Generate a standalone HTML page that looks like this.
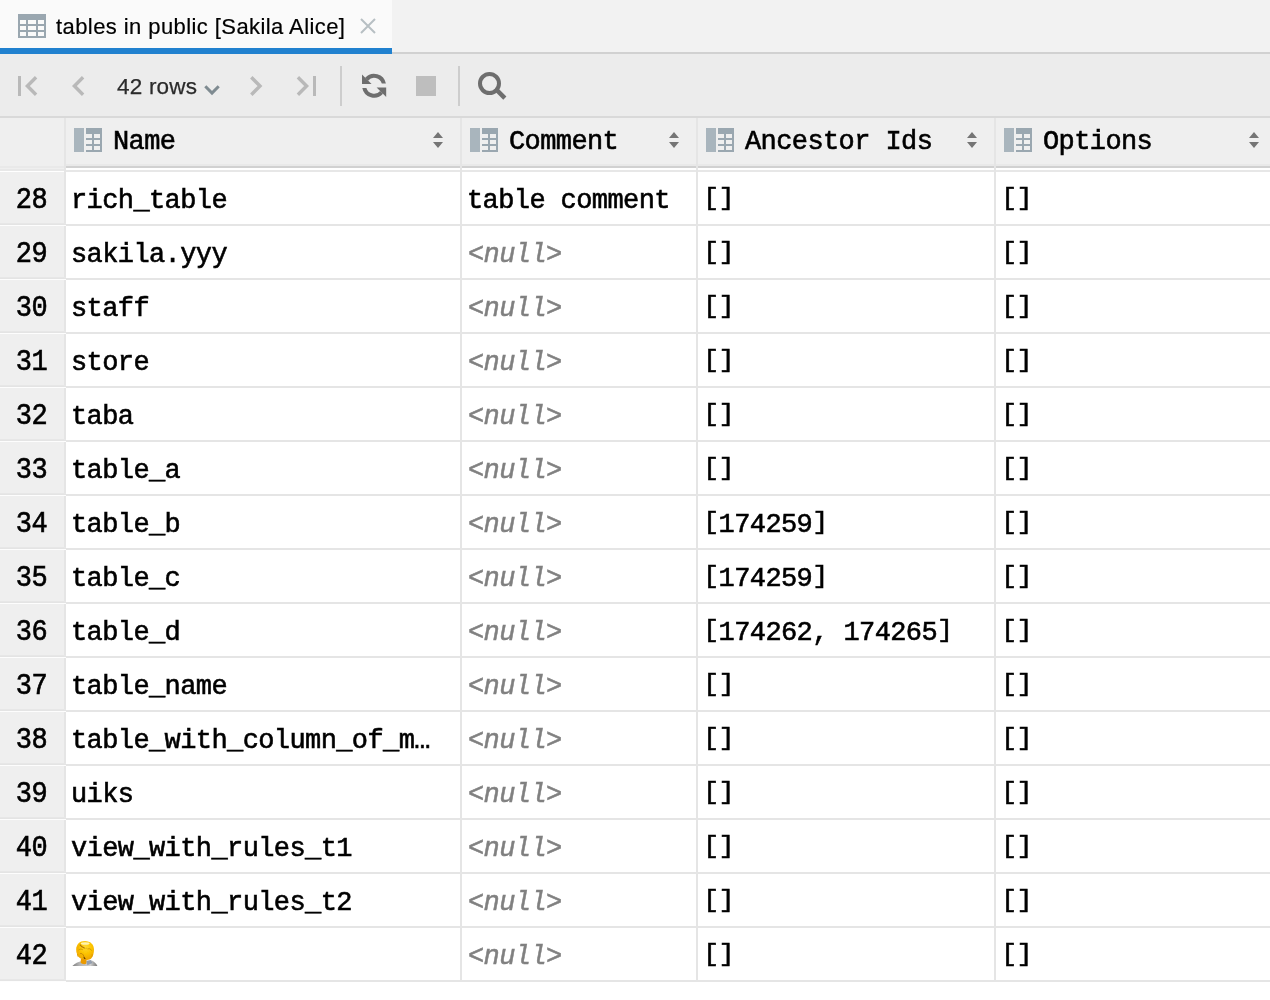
<!DOCTYPE html>
<html><head><meta charset="utf-8"><title>tables in public</title>
<style>
html,body{margin:0;padding:0;}
html{overflow:hidden;width:1270px;height:1000px;}
body{will-change:transform;width:1270px;height:1000px;overflow:hidden;background:#fff;position:relative;font-family:"Liberation Sans",sans-serif;}
.abs{position:absolute;}
#tabbar{position:absolute;left:0;top:0;width:1270px;height:54px;background:#f2f2f2;}
#tabline{position:absolute;left:0;top:52px;width:1270px;height:2px;background:#d1d1d1;}
#tab{position:absolute;left:0;top:0;width:392px;height:48px;background:#fafafa;}
#tabul{position:absolute;left:0;top:48px;width:392px;height:6px;background:#2181cf;}
#tabtxt{-webkit-text-stroke:0.2px #000;position:absolute;left:56px;top:12.5px;font-size:22px;letter-spacing:0.42px;line-height:28px;color:#000;white-space:nowrap;}
#toolbar{position:absolute;left:0;top:54px;width:1270px;height:62px;background:#ececec;}
#tbline{position:absolute;left:0;top:116px;width:1270px;height:2px;background:#d9d9d9;}
#rowstxt{-webkit-text-stroke:0.25px #2b2b2b;position:absolute;left:117px;top:72.5px;font-size:22.5px;letter-spacing:0.2px;line-height:28px;color:#2b2b2b;white-space:nowrap;}
#header{position:absolute;left:0;top:118px;width:1270px;height:48px;background:#efefef;}
.hband{position:absolute;left:66px;top:164px;width:1204px;height:2px;background:#e9e9e9;}
.hline{position:absolute;top:166px;height:2px;background:#d1d1d1;}
.hline2{position:absolute;top:170px;height:2px;background:#e7e7e7;}
.hgut{position:absolute;left:0;top:166px;width:64px;height:6px;background:#efefef;border-top:2px solid #e9e9e9;box-sizing:border-box;}
.hgut i{position:absolute;left:0;top:1px;width:64px;height:2px;background:#e8e8e8;}
.hgut b{position:absolute;left:0;top:3px;width:65px;height:1px;background:#fff;}
.t{font-family:"Liberation Mono",monospace;font-size:27px;letter-spacing:-0.6px;white-space:pre;color:#000;-webkit-text-stroke:0.6px #000;}
.hc{position:absolute;top:118px;height:48px;}
.hc .t{position:absolute;left:47px;top:8px;line-height:32px;}
.hc .ci{position:absolute;left:8px;top:10px;}
.hc .sa{position:absolute;right:17px;top:14px;}
.grid{position:absolute;left:0;top:0;width:1270px;height:1000px;}
.row{position:absolute;left:0;width:1270px;height:52px;border-bottom:2px solid #e5e5e5;}
.row .g{position:absolute;left:0;top:0;width:64px;height:54px;background:#efefef;}
.row::after{content:"";position:absolute;left:0;top:51px;width:66px;height:3px;background:linear-gradient(to bottom,#e7e7e7 0,#e7e7e7 1px,#e4e4e4 1px,#e4e4e4 2px,#fdfdfd 2px,#fdfdfd 3px);}
.row .g .t{position:absolute;right:17px;top:13px;line-height:32px;transform:scaleY(1.06);transform-origin:50% 75%;}
.c{position:absolute;top:0;height:52px;}
.c .t{position:absolute;left:5px;top:13px;line-height:32px;}
.c1{left:66px;width:394px;}
.c2{left:462px;width:234px;}
.c3{left:698px;width:296px;}
.c4{left:996px;width:274px;}
.nl{color:#808080;font-style:italic;-webkit-text-stroke:0.5px #808080;margin-left:1px;}
.vl{position:absolute;width:2px;background:#e5e5e5;}
.b{display:inline-block;transform:scaleY(0.86);transform-origin:50% 0;}
</style></head>
<body>
<div id="tabbar"></div><div id="tabline"></div>
<div id="tab"></div><div id="tabul"></div>
<svg class="abs" style="left:18px;top:14px" width="28" height="24" viewBox="0 0 28 24"><path fill="#9aa7b0" fill-rule="evenodd" d="M0 0h28v24H0z M2 6h6v4H2z M10 6h8v4h-8z M20 6h6v4h-6z M2 12h6v4H2z M10 12h8v4h-8z M20 12h6v4h-6z M2 18h6v4H2z M10 18h8v4h-8z M20 18h6v4h-6z"/></svg>
<div id="tabtxt">tables in public [Sakila Alice]</div>
<svg class="abs" style="left:358px;top:16px" width="20" height="20" viewBox="0 0 20 20"><path d="M3 3L17 17M17 3L3 17" stroke="#b7bfc3" stroke-width="2" fill="none"/></svg>
<div id="toolbar"></div><div id="tbline"></div>
<!-- first -->
<svg class="abs" style="left:14px;top:70px" width="32" height="32" viewBox="0 0 32 32"><path d="M5.5 6v20" stroke="#b9b9b9" stroke-width="3" fill="none"/><path d="M22.1 7.3L13.4 16L22.1 24.7" stroke="#b9b9b9" stroke-width="3.4" fill="none"/></svg>
<!-- prev -->
<svg class="abs" style="left:62px;top:70px" width="32" height="32" viewBox="0 0 32 32"><path d="M21.1 7.3L12.4 16L21.1 24.7" stroke="#b9b9b9" stroke-width="3.4" fill="none"/></svg>
<div id="rowstxt">42 rows</div>
<svg class="abs" style="left:200px;top:80px" width="24" height="20" viewBox="0 0 24 20"><path d="M5.3 6.2L12 13L18.7 6.2" stroke="#7f8b91" stroke-width="3" fill="none"/></svg>
<!-- next -->
<svg class="abs" style="left:240px;top:70px" width="32" height="32" viewBox="0 0 32 32"><path d="M11.3 7.3L20 16L11.3 24.7" stroke="#b9b9b9" stroke-width="3.4" fill="none"/></svg>
<!-- last -->
<svg class="abs" style="left:288px;top:70px" width="32" height="32" viewBox="0 0 32 32"><path d="M26.5 6v20" stroke="#b9b9b9" stroke-width="3" fill="none"/><path d="M9.9 7.3L18.6 16L9.9 24.7" stroke="#b9b9b9" stroke-width="3.4" fill="none"/></svg>
<div class="abs" style="left:340px;top:66px;width:2px;height:40px;background:#cdcdcd"></div>
<!-- refresh -->
<svg class="abs" style="left:358px;top:70px" width="32" height="32" viewBox="358 70 32 32"><g id="rf" fill="#6e6e6e"><path d="M365.2 77.8A12 12 0 0 1 385.9 83.6L381.8 83.6A8 8 0 0 0 368.06 80.66Z"/><path d="M362 74.6V84.1H371.6Z"/></g><use href="#rf" transform="rotate(180 374.1 85.8)"/></svg>
<!-- stop -->
<div class="abs" style="left:416px;top:76px;width:20px;height:20px;background:#bebebe"></div>
<div class="abs" style="left:458px;top:66px;width:2px;height:40px;background:#cdcdcd"></div>
<!-- search -->
<svg class="abs" style="left:474px;top:68px" width="36" height="36" viewBox="0 0 36 36"><circle cx="15.5" cy="15.5" r="9.5" stroke="#6e6e6e" stroke-width="4" fill="none"/><path d="M21.6 20.9L30.84 30.14" stroke="#6e6e6e" stroke-width="4.4" fill="none"/></svg>
<div id="header"></div>
<div class="hline" style="left:66px;width:1204px"></div>
<div class="hline2" style="left:0;width:1270px"></div>
<div class="hband"></div><div class="hgut"><i></i><b></b></div>
<div class="hc" style="left:66px;width:394px"><svg class="ci" width="28" height="24" viewBox="0 0 28 24"><use href="#colico"/></svg><span class="t">Name</span><svg class="sa" width="10" height="16" viewBox="0 0 10 16"><use href="#sortico"/></svg></div>
<div class="hc" style="left:462px;width:234px"><svg class="ci" width="28" height="24" viewBox="0 0 28 24"><use href="#colico"/></svg><span class="t">Comment</span><svg class="sa" width="10" height="16" viewBox="0 0 10 16"><use href="#sortico"/></svg></div>
<div class="hc" style="left:698px;width:296px"><svg class="ci" width="28" height="24" viewBox="0 0 28 24"><use href="#colico"/></svg><span class="t">Ancestor Ids</span><svg class="sa" width="10" height="16" viewBox="0 0 10 16"><use href="#sortico"/></svg></div>
<div class="hc" style="left:996px;width:280px"><svg class="ci" width="28" height="24" viewBox="0 0 28 24"><use href="#colico"/></svg><span class="t">Options</span><svg class="sa" width="10" height="16" viewBox="0 0 10 16"><use href="#sortico"/></svg></div>
<svg width="0" height="0" style="position:absolute"><defs>
<g id="colico"><rect x="0" y="0" width="10" height="24" fill="#a9b5bd"/><path fill="#9aa7b0" fill-rule="evenodd" d="M12 0h16v24H12z M12 6h6v4h-6z M20 6h6v4h-6z M12 12h6v4h-6z M20 12h6v4h-6z M12 18h6v4h-6z M20 18h6v4h-6z"/></g>
<g id="sortico"><path fill="#757575" d="M0 6L5 0L10 6z M0 10L5 16L10 10z"/></g>
</defs></svg>
<div class="vl" style="left:64px;top:118px;height:864px"></div>
<div class="vl" style="left:460px;top:118px;height:864px"></div>
<div class="vl" style="left:696px;top:118px;height:864px"></div>
<div class="vl" style="left:994px;top:118px;height:864px"></div>
<div class="grid">
<div class="row" style="top:172px"><div class="g"><span class="t">28</span></div><div class="c c1"><span class="t">rich_table</span></div><div class="c c2"><span class="t">table comment</span></div><div class="c c3"><span class="t"><span class="b">[</span><span class="b">]</span></span></div><div class="c c4"><span class="t"><span class="b">[</span><span class="b">]</span></span></div></div>
<div class="row" style="top:226px"><div class="g"><span class="t">29</span></div><div class="c c1"><span class="t">sakila.yyy</span></div><div class="c c2"><span class="t nl">&lt;null&gt;</span></div><div class="c c3"><span class="t"><span class="b">[</span><span class="b">]</span></span></div><div class="c c4"><span class="t"><span class="b">[</span><span class="b">]</span></span></div></div>
<div class="row" style="top:280px"><div class="g"><span class="t">30</span></div><div class="c c1"><span class="t">staff</span></div><div class="c c2"><span class="t nl">&lt;null&gt;</span></div><div class="c c3"><span class="t"><span class="b">[</span><span class="b">]</span></span></div><div class="c c4"><span class="t"><span class="b">[</span><span class="b">]</span></span></div></div>
<div class="row" style="top:334px"><div class="g"><span class="t">31</span></div><div class="c c1"><span class="t">store</span></div><div class="c c2"><span class="t nl">&lt;null&gt;</span></div><div class="c c3"><span class="t"><span class="b">[</span><span class="b">]</span></span></div><div class="c c4"><span class="t"><span class="b">[</span><span class="b">]</span></span></div></div>
<div class="row" style="top:388px"><div class="g"><span class="t">32</span></div><div class="c c1"><span class="t">taba</span></div><div class="c c2"><span class="t nl">&lt;null&gt;</span></div><div class="c c3"><span class="t"><span class="b">[</span><span class="b">]</span></span></div><div class="c c4"><span class="t"><span class="b">[</span><span class="b">]</span></span></div></div>
<div class="row" style="top:442px"><div class="g"><span class="t">33</span></div><div class="c c1"><span class="t">table_a</span></div><div class="c c2"><span class="t nl">&lt;null&gt;</span></div><div class="c c3"><span class="t"><span class="b">[</span><span class="b">]</span></span></div><div class="c c4"><span class="t"><span class="b">[</span><span class="b">]</span></span></div></div>
<div class="row" style="top:496px"><div class="g"><span class="t">34</span></div><div class="c c1"><span class="t">table_b</span></div><div class="c c2"><span class="t nl">&lt;null&gt;</span></div><div class="c c3"><span class="t"><span class="b">[</span>174259<span class="b">]</span></span></div><div class="c c4"><span class="t"><span class="b">[</span><span class="b">]</span></span></div></div>
<div class="row" style="top:550px"><div class="g"><span class="t">35</span></div><div class="c c1"><span class="t">table_c</span></div><div class="c c2"><span class="t nl">&lt;null&gt;</span></div><div class="c c3"><span class="t"><span class="b">[</span>174259<span class="b">]</span></span></div><div class="c c4"><span class="t"><span class="b">[</span><span class="b">]</span></span></div></div>
<div class="row" style="top:604px"><div class="g"><span class="t">36</span></div><div class="c c1"><span class="t">table_d</span></div><div class="c c2"><span class="t nl">&lt;null&gt;</span></div><div class="c c3"><span class="t"><span class="b">[</span>174262, 174265<span class="b">]</span></span></div><div class="c c4"><span class="t"><span class="b">[</span><span class="b">]</span></span></div></div>
<div class="row" style="top:658px"><div class="g"><span class="t">37</span></div><div class="c c1"><span class="t">table_name</span></div><div class="c c2"><span class="t nl">&lt;null&gt;</span></div><div class="c c3"><span class="t"><span class="b">[</span><span class="b">]</span></span></div><div class="c c4"><span class="t"><span class="b">[</span><span class="b">]</span></span></div></div>
<div class="row" style="top:712px"><div class="g"><span class="t">38</span></div><div class="c c1"><span class="t">table_with_column_of_m…</span></div><div class="c c2"><span class="t nl">&lt;null&gt;</span></div><div class="c c3"><span class="t"><span class="b">[</span><span class="b">]</span></span></div><div class="c c4"><span class="t"><span class="b">[</span><span class="b">]</span></span></div></div>
<div class="row" style="top:766px"><div class="g"><span class="t">39</span></div><div class="c c1"><span class="t">uiks</span></div><div class="c c2"><span class="t nl">&lt;null&gt;</span></div><div class="c c3"><span class="t"><span class="b">[</span><span class="b">]</span></span></div><div class="c c4"><span class="t"><span class="b">[</span><span class="b">]</span></span></div></div>
<div class="row" style="top:820px"><div class="g"><span class="t">40</span></div><div class="c c1"><span class="t">view_with_rules_t1</span></div><div class="c c2"><span class="t nl">&lt;null&gt;</span></div><div class="c c3"><span class="t"><span class="b">[</span><span class="b">]</span></span></div><div class="c c4"><span class="t"><span class="b">[</span><span class="b">]</span></span></div></div>
<div class="row" style="top:874px"><div class="g"><span class="t">41</span></div><div class="c c1"><span class="t">view_with_rules_t2</span></div><div class="c c2"><span class="t nl">&lt;null&gt;</span></div><div class="c c3"><span class="t"><span class="b">[</span><span class="b">]</span></span></div><div class="c c4"><span class="t"><span class="b">[</span><span class="b">]</span></span></div></div>
<div class="row" style="top:928px"><div class="g"><span class="t">42</span></div><div class="c c1"><svg class="abs" style="left:0px;top:8px" width="40" height="36" viewBox="0 0 40 36"><defs><radialGradient id="eh" cx="0.52" cy="0.32" r="0.7"><stop offset="0" stop-color="#ffd932"/><stop offset="0.5" stop-color="#fcc400"/><stop offset="1" stop-color="#eea200"/></radialGradient><linearGradient id="es" x1="0" y1="0" x2="1" y2="0"><stop offset="0" stop-color="#7e7e7e"/><stop offset="0.28" stop-color="#b4b4b4"/><stop offset="0.72" stop-color="#d0d0d0"/><stop offset="1" stop-color="#747474"/></linearGradient><filter id="eb" x="-10%" y="-10%" width="120%" height="120%"><feGaussianBlur stdDeviation="0.4"/></filter></defs><g filter="url(#eb)"><path d="M6.4 29.9C8.8 27.4 12.4 25.4 16 24.9L24.6 23.9C27.8 25 30.2 27.3 31.4 29.9Z" fill="url(#es)"/><path d="M20.4 25.2L24.8 23.9L26.4 27L21.4 29.3Z" fill="#7f8ea4" opacity="0.75"/><path d="M14.9 22.4L20.6 23.4L20.2 27.8C18.2 28.6 15.8 28 14.6 26.5Z" fill="#eb9a00"/><path d="M19 4.9C24.4 4.9 28 8.4 28 13.4C28 16.8 27 20.2 25.6 22C24.4 23.4 22.6 23.9 21 23.9C18.2 24 15.2 23.4 13.2 21.6C11.2 19.6 10.3 16.6 10.3 13.2C10.3 8.2 13.6 4.9 19 4.9Z" fill="url(#eh)"/><path d="M10.8 11C10.2 14 10.6 18 12.4 20.8C13 17.6 12.6 13.6 13.4 9.4Z" fill="#f6b400" opacity="0.9"/><ellipse cx="19.2" cy="7.5" rx="4.4" ry="1.3" fill="#fff4b8" opacity="0.95"/><path d="M13.8 8.6C15.2 10.6 17 11.8 18.8 12.3" stroke="#a86c00" stroke-width="1.1" fill="none" opacity="0.9"/><path d="M12.6 14C14 12.8 15.6 12.8 16.8 13.8M21.8 13.2C23 12.2 24.6 12.6 25.6 14.6" stroke="#bd8200" stroke-width="0.8" fill="none" opacity="0.85"/><path d="M19.4 12.4C20.2 12 21 12.2 21.6 12.8" stroke="#c88e00" stroke-width="0.6" fill="none" opacity="0.8"/><path d="M14.2 17.6C15.8 17.2 17 18.2 17.6 19.8C18 21.2 18.6 22.4 19.4 23.2" stroke="#b27400" stroke-width="0.9" fill="none" opacity="0.85"/><path d="M17.8 21.4L19.2 23" stroke="#5e3a00" stroke-width="1.1" fill="none"/><path d="M12 20.8C11.5 19.6 11.5 18.8 11.7 18M25.8 20.8C26.3 19.8 26.3 19 26.1 18.2" stroke="#cf8c00" stroke-width="0.8" fill="none" opacity="0.75"/></g></svg>
</div><div class="c c2"><span class="t nl">&lt;null&gt;</span></div><div class="c c3"><span class="t"><span class="b">[</span><span class="b">]</span></span></div><div class="c c4"><span class="t"><span class="b">[</span><span class="b">]</span></span></div></div>
</div>
</body></html>
